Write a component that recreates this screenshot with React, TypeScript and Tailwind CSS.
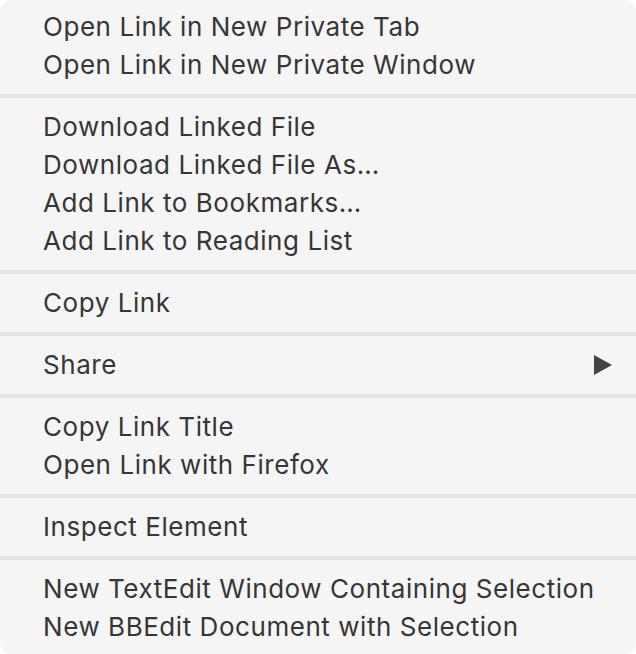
const groups: { label: string; submenu?: boolean }[][] = [
  [{ label: "Open Link in New Private Tab" }, { label: "Open Link in New Private Window" }],
  [
    { label: "Download Linked File" },
    { label: "Download Linked File As…" },
    { label: "Add Link to Bookmarks…" },
    { label: "Add Link to Reading List" },
  ],
  [{ label: "Copy Link" }],
  [{ label: "Share", submenu: true }],
  [{ label: "Copy Link Title" }, { label: "Open Link with Firefox" }],
  [{ label: "Inspect Element" }],
  [
    { label: "New TextEdit Window Containing Selection" },
    { label: "New BBEdit Document with Selection" },
  ],
];

export default function App() {
  return (
    <div className="w-[636px] h-[654px] bg-white">
      <div
        className="h-full rounded-[12px] bg-[#f5f5f5] py-2 text-[26px] tracking-[0.55px] text-[#363636]"
        style={{ fontFamily: "Inter, 'Noto Sans', sans-serif" }}
      >
        {groups.map((group, i) => (
          <div key={i}>
            {i > 0 && <div className="my-[10px] h-[4px] bg-[#e4e4e4]" />}
            {group.map((item) => (
              <div
                key={item.label}
                className="flex h-[38px] items-center justify-between pl-[43px] pr-[24px] leading-none"
              >
                <span>{item.label}</span>
                {item.submenu && (
                  <svg width="18" height="20" viewBox="0 0 18 20">
                    <path d="M0 0 L18 10 L0 20 Z" fill="#444" />
                  </svg>
                )}
              </div>
            ))}
          </div>
        ))}
      </div>
    </div>
  );
}
